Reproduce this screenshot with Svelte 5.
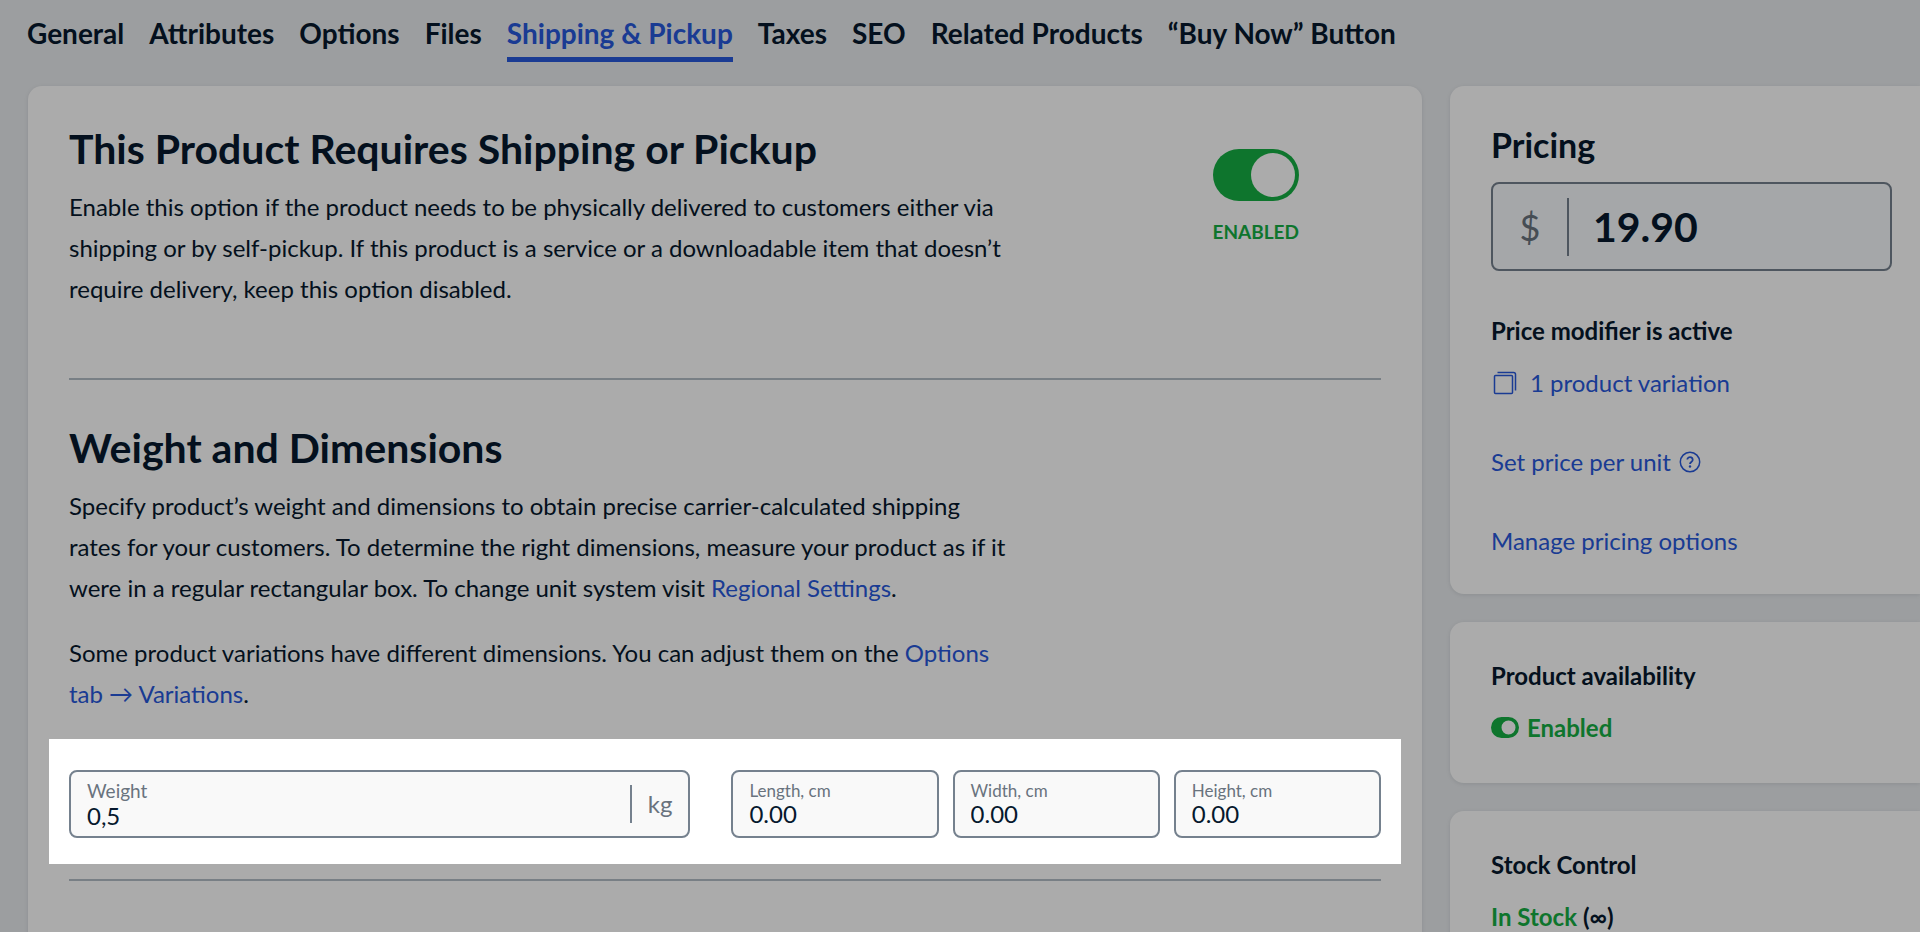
<script>
  const tabs = [
    "General",
    "Attributes",
    "Options",
    "Files",
    "Shipping & Pickup",
    "Taxes",
    "SEO",
    "Related Products",
    "“Buy Now” Button",
  ];
  const activeTab = "Shipping & Pickup";

  let requiresShipping = true;
  let price = "19.90";
  let weight = "0,5";
  let dimensions = [
    { id: "length", label: "Length, cm", value: "0.00" },
    { id: "width", label: "Width, cm", value: "0.00" },
    { id: "height", label: "Height, cm", value: "0.00" },
  ];
</script>

<div class="page">
  <nav class="tabs">
    {#each tabs as tab}
      <a href="#top" class="tab" class:active={tab === activeTab}>{tab}</a>
    {/each}
  </nav>

  <div class="layout">
    <main class="card main">
      <section class="shipping">
        <div class="copy">
          <h1>This Product Requires Shipping or Pickup</h1>
          <p>
            Enable this option if the product needs to be physically delivered to customers either via
            shipping or by self-pickup. If this product is a service or a downloadable item that doesn’t
            require delivery, keep this option disabled.
          </p>
        </div>
        <label class="switch">
          <input type="checkbox" bind:checked={requiresShipping} />
          <span>{requiresShipping ? "ENABLED" : "DISABLED"}</span>
        </label>
      </section>

      <hr />

      <section class="dimensions">
        <div class="copy">
          <h1>Weight and Dimensions</h1>
          <p>
            Specify product’s weight and dimensions to obtain precise carrier-calculated shipping rates
            for your customers. To determine the right dimensions, measure your product as if it were in
            a regular rectangular box. To change unit system visit <a href="#settings">Regional Settings</a>.
          </p>
          <p>
            Some product variations have different dimensions. You can adjust them on the
            <a href="#options">Options tab → Variations</a>.
          </p>
        </div>

        <div class="spotlight">
          <div class="field weight">
            <div class="field-body">
              <label for="weight">Weight</label>
              <input id="weight" type="text" bind:value={weight} />
            </div>
            <span class="unit">kg</span>
          </div>
          <div class="sizes">
            {#each dimensions as item}
              <div class="field">
                <div class="field-body">
                  <label for={item.id}>{item.label}</label>
                  <input id={item.id} type="text" bind:value={item.value} />
                </div>
              </div>
            {/each}
          </div>
        </div>
      </section>

      <hr />
    </main>

    <aside>
      <section class="card side pricing">
        <h2><label for="price">Pricing</label></h2>
        <div class="price">
          <span class="currency">$</span>
          <input id="price" type="text" bind:value={price} />
        </div>
        <h3>Price modifier is active</h3>
        <a class="row variation" href="#variations">
          <svg width="26" height="26" viewBox="0 0 26 26" fill="none" stroke="currentColor" stroke-width="1.5">
            <rect x="3.5" y="5.5" width="18" height="18" rx="1" />
            <path d="M6.5 2.5h16a2 2 0 0 1 2 2v16" />
          </svg>
          1 product variation
        </a>
        <a class="row link" href="#unit">
          Set price per unit
          <svg width="22" height="22" viewBox="0 0 22 22" fill="none" stroke="currentColor">
            <circle cx="11" cy="11" r="9.7" stroke-width="1.5" />
            <path d="M8.3 8.6a2.7 2.5 0 1 1 4.4 2c-1 .8-1.7 1.1-1.7 2.4" stroke-width="1.8" />
            <circle cx="11" cy="15.5" r="1.2" fill="currentColor" stroke="none" />
          </svg>
        </a>
        <a class="row link" href="#pricing">Manage pricing options</a>
      </section>

      <section class="card side">
        <h3>Product availability</h3>
        <div class="row status">
          <svg width="28" height="21" viewBox="0 0 28 21">
            <path
              fill="currentColor"
              fill-rule="evenodd"
              d="M10.5 0h7a10.5 10.5 0 0 1 0 21h-7a10.5 10.5 0 0 1 0-21zM17.5 3.5a7 7 0 1 0 0 14a7 7 0 0 0 0-14z"
            />
          </svg>
          Enabled
        </div>
      </section>

      <section class="card side">
        <h3>Stock Control</h3>
        <div class="row stock"><span>In Stock</span> (∞)</div>
      </section>
    </aside>
  </div>
</div>

<style>
  :global(body) {
    margin: 0;
  }

  .page {
    --text: #06182d;
    --muted: #69737e;
    --blue: #2758db;
    --green: #16af43;
    --line: #75818e;
    box-sizing: border-box;
    height: 100vh;
    overflow: hidden;
    background: #e9ecef;
    color: var(--text);
    font-family: Lato, sans-serif;
    font-size: 24px;
    line-height: 41px;
  }

  a {
    color: var(--blue);
    text-decoration: none;
  }

  input {
    box-sizing: border-box;
    min-width: 0;
    margin: 0;
    padding: 0;
    border: 0;
    outline: 0;
    background: none;
    color: inherit;
    font: inherit;
  }

  h1,
  h2,
  h3,
  p {
    margin: 0;
  }

  h1 {
    font-size: 41px;
    line-height: 50px;
  }

  hr {
    width: 100%;
    margin: 0;
    border: 0;
    border-top: 2px solid #b4bec7;
  }

  .tabs {
    display: flex;
    gap: 25px;
    padding: 11px 27px 24px;
  }

  .tab {
    padding-bottom: 2px;
    border-bottom: 5px solid transparent;
    color: var(--text);
    font-size: 28px;
    font-weight: 700;
    line-height: 44px;
    white-space: nowrap;
  }

  .tab.active {
    border-color: var(--blue);
    color: var(--blue);
  }

  .layout {
    display: grid;
    grid-template-columns: minmax(0, 1fr) 470px;
    gap: 28px;
    padding-left: 28px;
  }

  .card {
    border-radius: 14px;
    background: #fff;
    box-shadow: 0 1px 4px rgba(0, 20, 40, 0.1);
  }

  .main {
    position: relative;
    z-index: 1;
    padding: 38px 41px 80px;
  }

  .copy {
    width: 940px;
  }

  .copy p {
    padding-top: 12px;
  }

  .copy p + p {
    padding-top: 24px;
  }

  .shipping {
    display: flex;
    justify-content: space-between;
    padding-bottom: 69px;
  }

  .switch {
    display: flex;
    flex-direction: column;
    align-items: center;
    gap: 12px;
    padding: 25px 82px 0 0;
    color: var(--green);
    font-size: 19px;
    font-weight: 700;
  }

  .switch input {
    appearance: none;
    display: flex;
    justify-content: flex-end;
    width: 86px;
    height: 52px;
    padding: 4px;
    border-radius: 26px;
    background: var(--green);
  }

  .switch input::before {
    content: "";
    width: 44px;
    height: 44px;
    border-radius: 50%;
    background: #fff;
  }

  .switch input:not(:checked) {
    justify-content: flex-start;
    background: var(--line);
  }

  .switch span {
    line-height: 38px;
  }

  .dimensions {
    padding: 43px 0 15px;
  }

  /* Dims everything on the page around the highlighted fields */
  .spotlight {
    position: relative;
    z-index: 1;
    display: grid;
    grid-template-columns: 22fr 23fr;
    gap: 41px;
    margin: 25px -20px 0;
    padding: 31px 20px 26px;
    background: #fff;
    box-shadow: 0 0 0 2000px rgba(0, 0, 0, 0.33);
  }

  .sizes {
    display: grid;
    grid-template-columns: repeat(3, minmax(0, 1fr));
    gap: 14px;
  }

  .field {
    box-sizing: border-box;
    display: flex;
    align-items: center;
    height: 68px;
    padding: 0 16px;
    border: 2px solid var(--line);
    border-radius: 8px;
    background: #f9f9f9;
  }

  .field-body {
    display: flex;
    flex: 1;
    flex-direction: column;
    min-width: 0;
  }

  .field label {
    color: var(--muted);
    font-size: 17px;
    line-height: 20px;
  }

  .field input {
    width: 100%;
    height: 26px;
    line-height: 26px;
  }

  .weight label {
    font-size: 19px;
    line-height: 24px;
  }

  .unit {
    padding-left: 16px;
    border-left: 2px solid var(--line);
    color: var(--muted);
    line-height: 38px;
  }

  aside {
    display: flex;
    flex-direction: column;
    gap: 28px;
  }

  .side {
    padding: 39px 28px 35px 41px;
    border-radius: 14px 0 0 14px;
  }

  .pricing {
    padding: 38px 28px 33px 41px;
  }

  h2 {
    font-size: 34px;
    line-height: 42px;
  }

  h3 {
    font-size: 24px;
    line-height: 30px;
  }

  .price {
    box-sizing: border-box;
    display: flex;
    align-items: center;
    height: 89px;
    margin: 16px 0 45px;
    border: 2px solid var(--line);
    border-radius: 8px;
    background: #f6f9fc;
  }

  .currency {
    width: 74px;
    border-right: 2px solid var(--line);
    color: var(--muted);
    font-size: 36px;
    line-height: 58px;
    text-align: center;
  }

  .price input {
    flex: 1;
    padding-left: 24px;
    font-size: 41px;
    font-weight: 700;
  }

  .row {
    display: flex;
    align-items: center;
    gap: 8px;
    min-height: 41px;
    margin-top: 16px;
  }

  .variation {
    gap: 13px;
  }

  .link {
    margin-top: 38px;
  }

  .status {
    color: var(--green);
    font-weight: 700;
  }

  .stock {
    gap: 6px;
    font-weight: 700;
  }

  .stock span {
    color: var(--green);
  }
</style>
